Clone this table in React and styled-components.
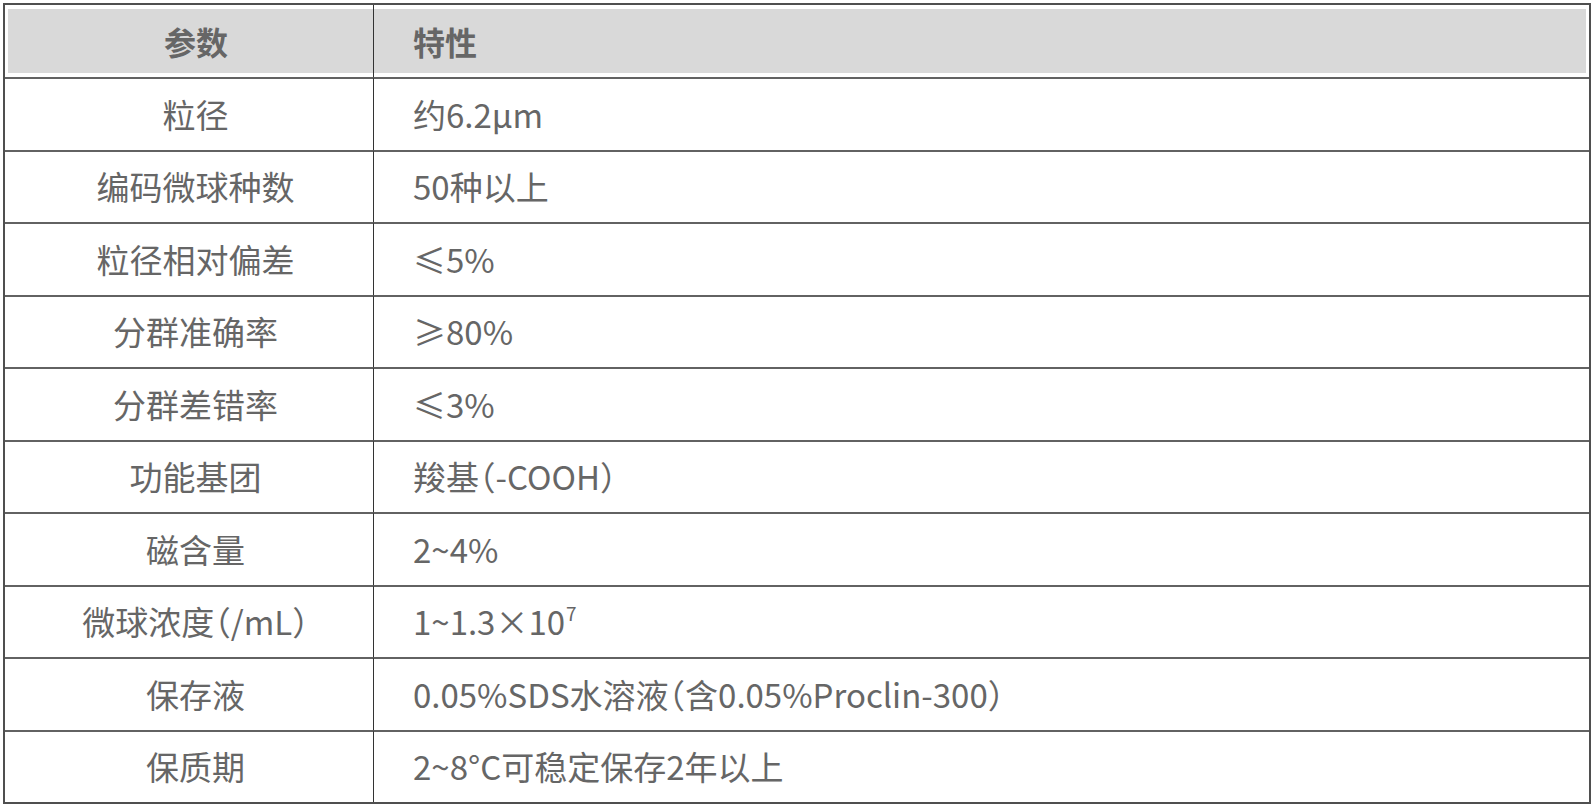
import React from "react";
import styled, { createGlobalStyle } from "styled-components";

const Global = createGlobalStyle`
  html, body { margin: 0; padding: 0; background: #fff; }
  body { font-family: "Noto Sans CJK SC", "Noto Sans", sans-serif; }
`;

const Frame = styled.div`
  margin: 3px 0 0 3px;
  width: 1588px;
  box-sizing: border-box;
  border: 2px solid #4f4f4f;
  display: grid;
  grid-template-columns: 369px 1fr;
  color: #666;
`;

const HeadCell = styled.div`
  height: 72px;
  box-sizing: border-box;
  padding: ${(p) => (p.$first ? "4px 0 4px 3px" : "4px 3px 4px 0")};
  border-right: ${(p) => (p.$first ? "1px solid #333" : "none")};
`;

const HeadFill = styled.div`
  height: 100%;
  background: #d9d9d9;
  display: flex;
  align-items: center;
  justify-content: ${(p) => (p.$center ? "center" : "flex-start")};
  padding-left: ${(p) => (p.$center ? "11px" : "39px")};
  font-size: 32px;
  font-weight: 700;
  color: #666;
`;

const Cell = styled.div`
  height: 72.5px;
  box-sizing: border-box;
  border-top: 2px solid #626262;
  border-right: ${(p) => (p.$first ? "1px solid #333" : "none")};
  display: flex;
  align-items: center;
  justify-content: ${(p) => (p.$first ? "center" : "flex-start")};
  padding-left: ${(p) => (p.$first ? "13px" : "39px")};
  font-size: 33px;
  font-weight: 400;
  line-height: 1;
  color: #666;
`;

const Paren = styled.span`
  font-feature-settings: "halt";
`;

const Sup = styled.span`
  display: inline-block;
  font-size: 19px;
  line-height: 1;
  transform: translateY(-9px);
  margin-left: 1px;
`;

const rows = [
  ["粒径", "约6.2μm"],
  ["编码微球种数", "50种以上"],
  ["粒径相对偏差", "≤5%"],
  ["分群准确率", "≥80%"],
  ["分群差错率", "≤3%"],
  ["功能基团", <>羧基<Paren>（</Paren>-COOH<Paren>）</Paren></>],
  ["磁含量", "2~4%"],
  [<>微球浓度<Paren>（</Paren>/mL<Paren>）</Paren></>, <>1~1.3×10<Sup>7</Sup></>],
  ["保存液", <>0.05%SDS水溶液<Paren>（</Paren>含0.05%Proclin-300<Paren>）</Paren></>],
  ["保质期", "2~8°C可稳定保存2年以上"],
];

export default function App() {
  return (
    <>
      <Global />
      <Frame>
        <HeadCell $first>
          <HeadFill $center>参数</HeadFill>
        </HeadCell>
        <HeadCell>
          <HeadFill>特性</HeadFill>
        </HeadCell>
        {rows.map(([k, v], i) => (
          <React.Fragment key={i}>
            <Cell $first>{k}</Cell>
            <Cell>{v}</Cell>
          </React.Fragment>
        ))}
      </Frame>
    </>
  );
}
